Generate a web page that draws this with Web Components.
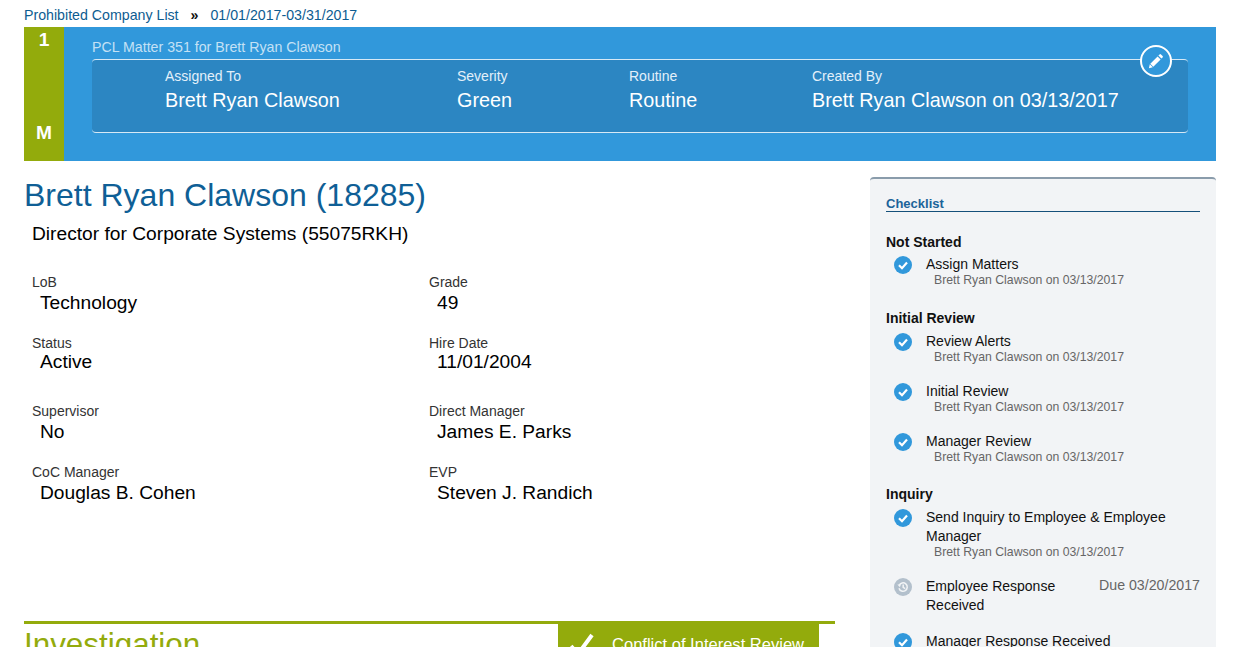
<!DOCTYPE html>
<html>
<head>
<meta charset="utf-8">
<title>PCL Matter 351</title>
<style>
  html, body { margin: 0; height: 647px; overflow: hidden; background: #fff; }
  body { font-family: "Liberation Sans", Arial, sans-serif; }
</style>
</head>
<body>
<pcl-page>
  <pcl-breadcrumb slot="crumbs" root="Prohibited Company List" current="01/01/2017-03/31/2017"></pcl-breadcrumb>
  <matter-header slot="header" title-text="PCL Matter 351 for Brett Ryan Clawson" top="1" bottom="M">
    <matter-stat label="Assigned To" value="Brett Ryan Clawson" style="width:292px"></matter-stat>
    <matter-stat label="Severity" value="Green" style="width:172px"></matter-stat>
    <matter-stat label="Routine" value="Routine" style="width:183px"></matter-stat>
    <matter-stat label="Created By" value="Brett Ryan Clawson on 03/13/2017"></matter-stat>
  </matter-header>
  <employee-panel slot="main" name="Brett Ryan Clawson (18285)" role="Director for Corporate Systems (55075RKH)">
    <employee-field label="LoB" value="Technology"></employee-field>
    <employee-field label="Grade" value="49"></employee-field>
    <employee-field label="Status" value="Active" style="--value-gap:0px"></employee-field>
    <employee-field label="Hire Date" value="11/01/2004" style="--value-gap:0px"></employee-field>
    <employee-field label="Supervisor" value="No"></employee-field>
    <employee-field label="Direct Manager" value="James E. Parks"></employee-field>
    <employee-field label="CoC Manager" value="Douglas B. Cohen"></employee-field>
    <employee-field label="EVP" value="Steven J. Randich"></employee-field>
  </employee-panel>
  <investigation-bar slot="main" tab="Conflict of Interest Review">Investigation</investigation-bar>
  <check-list slot="side" heading="Checklist">
    <check-group heading="Not Started" style="--head-gap:5px;--group-gap:21px">
      <check-item by="Brett Ryan Clawson on 03/13/2017">Assign Matters</check-item>
    </check-group>
    <check-group heading="Initial Review" style="--head-gap:6px;--group-gap:20px">
      <check-item by="Brett Ryan Clawson on 03/13/2017">Review Alerts</check-item>
      <check-item by="Brett Ryan Clawson on 03/13/2017">Initial Review</check-item>
      <check-item by="Brett Ryan Clawson on 03/13/2017">Manager Review</check-item>
    </check-group>
    <check-group heading="Inquiry" style="--head-gap:6px;--group-gap:20px">
      <check-item by="Brett Ryan Clawson on 03/13/2017">Send Inquiry to Employee &amp; Employee Manager</check-item>
      <check-item state="pending" due="Due 03/20/2017">Employee Response Received</check-item>
      <check-item>Manager Response Received</check-item>
    </check-group>
  </check-list>
</pcl-page>

<script>
const define = (name, css, html, extra = class extends HTMLElement {}) => {
  const template = document.createElement("template");
  template.innerHTML = `<style>${css}</style>${html}`;
  customElements.define(name, class extends extra {
    constructor() {
      super();
      this.attachShadow({ mode: "open" });
      this.shadowRoot.appendChild(template.content.cloneNode(true));
      // data-text="attr" fills a node's text from the host attribute
      this.shadowRoot.querySelectorAll("[data-text]").forEach((el) => {
        el.textContent = this.getAttribute(el.dataset.text) || "";
      });
    }
  });
};

define("pcl-page", `
  :host { display: block; padding: 0 21px 0 24px; }
  .columns { display: flex; gap: 35px; margin-top: 16px; }
  .main { width: 811px; flex: none; }
  .side { width: 346px; flex: none; }
`, `
  <slot name="crumbs"></slot>
  <slot name="header"></slot>
  <div class="columns">
    <div class="main"><slot name="main"></slot></div>
    <div class="side"><slot name="side"></slot></div>
  </div>
`);

define("pcl-breadcrumb", `
  :host { display: flex; height: 27px; padding-top: 7px; box-sizing: border-box; font-size: 14.2px; line-height: 16px; color: #0d5c91; }
  .sep { color: #111; margin: 0 12px; font-weight: bold; }
`, `<span data-text="root"></span><span class="sep">»</span><span data-text="current"></span>`);

define("matter-header", `
  :host { display: flex; height: 134px; background: #3198db; color: #fff; }
  .rank { width: 40px; flex: none; background: #93ab0c; display: flex; flex-direction: column; justify-content: space-between; align-items: center; font-size: 19.2px; font-weight: bold; line-height: 21px; padding: 2px 0 18px; box-sizing: border-box; }
  .body { flex: 1; padding: 12px 28px 0 28px; }
  .title { font-size: 14.2px; line-height: 16px; color: #c4e1f5; height: 20px; }
  .box { position: relative; display: flex; height: 74px; padding: 8px 0 0 73px; box-sizing: border-box; background: #2c86c2; border-top: 1px solid #d6e9f6; border-bottom: 1px solid #d6e9f6; border-radius: 4px; }
  .edit { position: absolute; right: 16px; top: -15px; width: 32px; height: 32px; box-sizing: border-box; border: 2px solid #fff; border-radius: 50%; background: #3198db; display: flex; align-items: center; justify-content: center; }
`, `
  <div class="rank"><span data-text="top"></span><span data-text="bottom"></span></div>
  <div class="body">
    <div class="title" data-text="title-text"></div>
    <div class="box">
      <slot></slot>
      <div class="edit">
        <svg width="18" height="18" viewBox="0 0 18 18"><path fill="#fff" d="M12.6 2.4a1 1 0 0 1 1.4 0l1.6 1.6a1 1 0 0 1 0 1.4l-1.2 1.2-3-3zM10.6 4.4l3 3-7.3 7.3-3-3zM2.8 12.2l3 3-3.9 1z"/></svg>
      </div>
    </div>
  </div>
`);

define("matter-stat", `
  :host { display: block; flex: none; }
  .label { font-size: 14px; line-height: 17px; color: #e3f0fa; }
  .value { font-size: 19.8px; line-height: 23px; margin-top: 4px; color: #fff; white-space: nowrap; }
`, `<div class="label" data-text="label"></div><div class="value" data-text="value"></div>`);

define("employee-panel", `
  :host { display: block; height: 444px; }
  h1 { margin: 0; font-size: 32px; font-weight: normal; line-height: 36px; color: #0f5f96; }
  .role { font-size: 19.2px; line-height: 21px; color: #000; margin: 10px 0 0 8px; }
  .grid { display: grid; grid-template-columns: 397px 1fr; grid-template-rows: 61px 68px 61px 61px; margin: 30px 0 0 8px; }
`, `
  <h1 data-text="name"></h1>
  <div class="role" data-text="role"></div>
  <div class="grid"><slot></slot></div>
`);

define("employee-field", `
  :host { display: block; }
  .label { font-size: 14px; line-height: 16px; color: #333; }
  .value { font-size: 19.2px; line-height: 21px; color: #000; margin: var(--value-gap, 2px) 0 0 8px; }
`, `<div class="label" data-text="label"></div><div class="value" data-text="value"></div>`);

define("investigation-bar", `
  :host { display: flex; justify-content: space-between; border-top: 3px solid #93ab0c; height: 60px; padding-right: 16px; }
  .title { font-size: 31.4px; line-height: 36px; color: #93ab0c; margin-top: 3px; }
  .tab { width: 261px; height: 60px; box-sizing: border-box; background: #93ab0c; color: #fff; display: flex; align-items: flex-start; padding: 8px 0 0 11px; font-size: 16.55px; line-height: 20px; gap: 17px; }
  .tab svg { flex: none; }
  .tab span { margin-top: 3px; white-space: nowrap; }
`, `
  <div class="title"><slot></slot></div>
  <div class="tab">
    <svg width="26" height="24" viewBox="0 0 26 24"><path fill="none" stroke="#fff" stroke-width="4" d="M2 14l7 8L23 3"/></svg>
    <span data-text="tab"></span>
  </div>
`);

define("check-list", `
  :host { display: block; height: 470px; box-sizing: border-box; background: #f2f4f6; border-top: 2px solid #8a9cab; border-radius: 4px 4px 0 0; padding: 17px 16px 0; }
  .head { font-size: 13px; font-weight: bold; line-height: 15px; color: #1b6399; border-bottom: 1px solid #15507a; margin-bottom: 22px; }
`, `<div class="head" data-text="heading"></div><slot></slot>`);

define("check-group", `
  :host { display: block; margin-bottom: var(--group-gap, 20px); }
  .head { font-size: 14px; font-weight: bold; line-height: 16px; color: #111; margin-bottom: var(--head-gap, 6px); }
  .items { display: flex; flex-direction: column; gap: 16px; }
`, `<div class="head" data-text="heading"></div><div class="items"><slot></slot></div>`);

const checkIcon = `<svg class="done" width="18" height="18" viewBox="0 0 18 18"><circle cx="9" cy="9" r="9" fill="#3198db"/><path fill="none" stroke="#fff" stroke-width="2.2" d="M5 9.2l3 3 5-5.6"/></svg>`;
const pendingIcon = `<svg class="pending" width="18" height="18" viewBox="0 0 18 18"><circle cx="9" cy="9" r="9" fill="#b3c0cc"/><path fill="none" stroke="#f2f4f6" stroke-width="1.5" d="M5.2 7.4A4.2 4.2 0 1 1 5 10.2M9.2 6.4v3l2 1.2"/><path fill="#f2f4f6" d="M3.4 6.4l3.4.1-.9 2.7z"/></svg>`;

define("check-item", `
  :host { display: grid; grid-template-columns: 32px 1fr auto; padding-left: 8px; margin-bottom: 2px; color: #111; font-size: 14px; line-height: 19px; }
  :host([state="pending"]) { margin-bottom: 1px; }
  svg { display: none; margin-top: 1px; }
  :host(:not([state="pending"])) svg.done { display: block; }
  :host([state="pending"]) svg.pending { display: block; }
  .text { grid-column: 2; }
  .due { grid-column: 3; color: #666; font-size: 14.2px; white-space: nowrap; padding-left: 20px; margin-top: -1px; }
  .by { grid-column: 2 / 4; font-size: 12.25px; line-height: 14px; color: #666; padding-left: 8px; margin-top: -1px; }
  .by:empty, .due:empty { display: none; }
`, `
  <div>${checkIcon}${pendingIcon}</div>
  <div class="text"><slot></slot></div>
  <div class="due" data-text="due"></div>
  <div class="by" data-text="by"></div>
`);
</script>
</body>
</html>
